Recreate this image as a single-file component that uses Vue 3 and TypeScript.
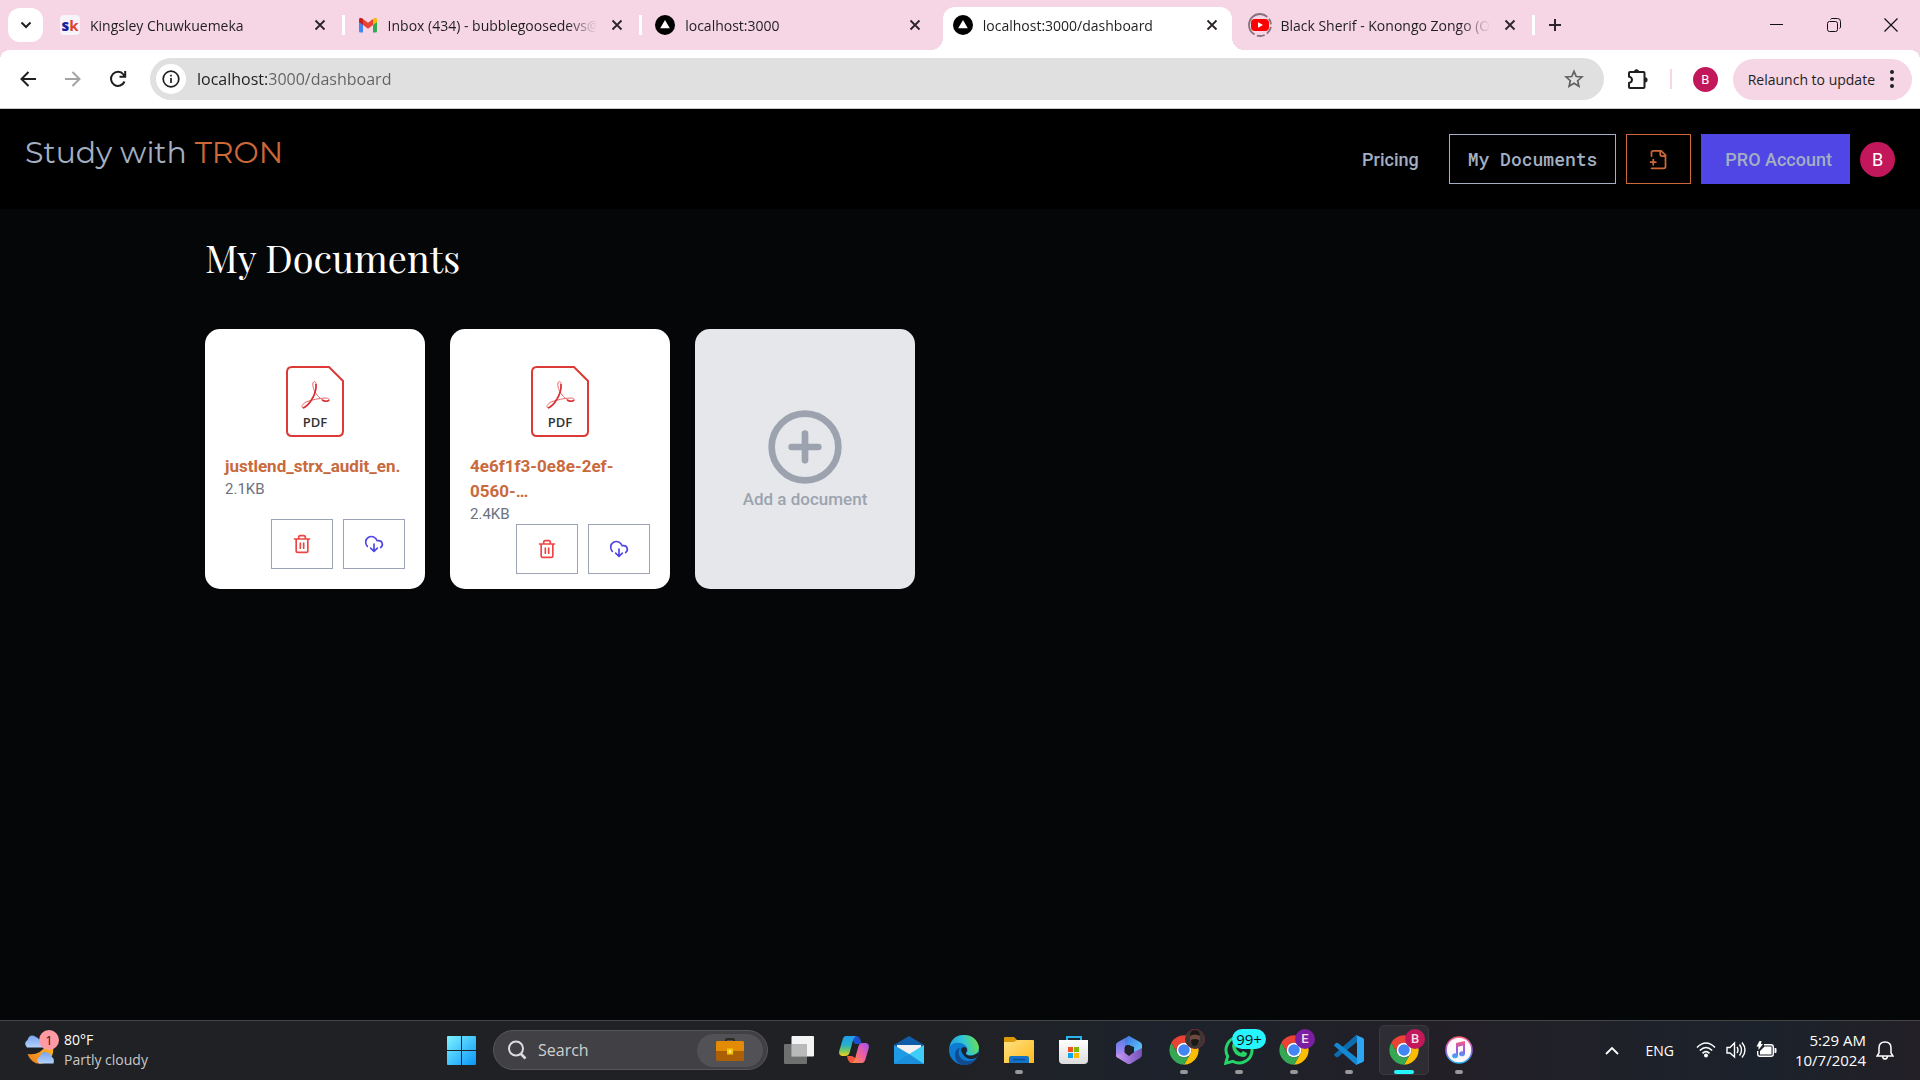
<script setup lang="ts">
import { ref } from 'vue'

interface Tab {
  title: string
  icon: 'sk' | 'gmail' | 'next' | 'youtube'
  active?: boolean
  divider?: boolean
}

interface Doc {
  name: string
  size: string
}

const tabs: Tab[] = [
  { title: 'Kingsley Chuwkuemeka', icon: 'sk', divider: true },
  { title: 'Inbox (434) - bubblegoosedevs@', icon: 'gmail', divider: true },
  { title: 'localhost:3000', icon: 'next' },
  { title: 'localhost:3000/dashboard', icon: 'next', active: true },
  { title: 'Black Sherif - Konongo Zongo (O', icon: 'youtube', divider: true },
]

const docs: Doc[] = [
  { name: 'justlend_strx_audit_en.', size: '2.1KB' },
  { name: '4e6f1f3-0e8e-2ef-0560-…', size: '2.4KB' },
]

const address = ref('localhost:3000/dashboard')
const query = ref('')
</script>

<template>
  <div class="screen">
    <svg class="defs" width="0" height="0" aria-hidden="true">
      <defs>
        <symbol id="chrome" viewBox="0 0 48 48">
          <path fill="#ea4335" d="M4.95 13A22 22 0 0 1 43.05 13H24A11 11 0 0 0 14.47 29.5Z" />
          <path fill="#fbbc04" d="M43.05 13A22 22 0 0 1 24 46L33.53 29.5A11 11 0 0 0 24 13Z" />
          <path fill="#34a853" d="M24 46A22 22 0 0 1 4.95 13L14.47 29.5A11 11 0 0 0 33.53 29.5Z" />
          <circle cx="24" cy="24" r="11" fill="#fff" />
          <circle cx="24" cy="24" r="8.6" fill="#4285f4" />
        </symbol>
        <symbol id="cross" viewBox="0 0 12 12">
          <path d="M1.5 1.5l9 9M10.5 1.5l-9 9" stroke="#2b2429" stroke-width="1.8" />
        </symbol>
        <linearGradient id="win" x1="0" y1="0" x2="1" y2="1">
          <stop offset="0" stop-color="#7df3ff" /><stop offset="1" stop-color="#0a95f8" />
        </linearGradient>
        <linearGradient id="cpA" x1="0" y1="0" x2="0" y2="1">
          <stop offset="0" stop-color="#1f9df0" /><stop offset=".45" stop-color="#27b0c8" /><stop offset=".75" stop-color="#7cc95a" /><stop offset="1" stop-color="#f5d21c" />
        </linearGradient>
        <linearGradient id="cpB" x1="1" y1="0" x2="0" y2="1">
          <stop offset="0" stop-color="#a351f0" /><stop offset=".5" stop-color="#ee5fa0" /><stop offset="1" stop-color="#fd8b3a" />
        </linearGradient>
        <linearGradient id="edgeA" x1="0" y1=".6" x2="1" y2=".4">
          <stop offset="0" stop-color="#1f9ee0" /><stop offset=".5" stop-color="#30c4d8" /><stop offset="1" stop-color="#68e04a" />
        </linearGradient>
        <linearGradient id="folder" x1="0" y1="0" x2="1" y2="1">
          <stop offset="0" stop-color="#ffe083" /><stop offset="1" stop-color="#fdbb1b" />
        </linearGradient>
        <linearGradient id="mA" x1="0" y1="0" x2="0" y2="1">
          <stop offset="0" stop-color="#4f7ce8" /><stop offset="1" stop-color="#b98af0" />
        </linearGradient>
        <linearGradient id="mB" x1="0" y1="0" x2="1" y2="1">
          <stop offset="0" stop-color="#3f6fe0" /><stop offset="1" stop-color="#62d8fa" />
        </linearGradient>
        <linearGradient id="mC" x1="0" y1="0" x2="1" y2="0">
          <stop offset="0" stop-color="#c79af5" /><stop offset="1" stop-color="#7550b8" />
        </linearGradient>
        <linearGradient id="note" x1="0" y1="0" x2="0" y2="1">
          <stop offset="0" stop-color="#fb5c74" /><stop offset=".5" stop-color="#9a5ae0" /><stop offset="1" stop-color="#2fb4f5" />
        </linearGradient>
        <linearGradient id="store" x1="0" y1="0" x2="0" y2="1">
          <stop offset="0" stop-color="#fff" /><stop offset="1" stop-color="#dcdcdc" />
        </linearGradient>
        <linearGradient id="moon" x1="1" y1="0" x2="0" y2="1">
          <stop offset="0" stop-color="#fbbf24" /><stop offset="1" stop-color="#f07a1c" />
        </linearGradient>
        <linearGradient id="cloud" x1="0" y1="0" x2="0" y2="1">
          <stop offset="0" stop-color="#79a4ee" /><stop offset="1" stop-color="#b4d2fb" />
        </linearGradient>
      </defs>
    </svg>

    <header class="strip">
      <button class="tab-search" aria-label="Search tabs">
        <svg width="12" height="8" viewBox="0 0 12 8"><path d="M1.5 1.5L6 6l4.500-4.500" fill="none" stroke="#1f1f1f" stroke-width="2" /></svg>
      </button>
      <div class="tabs" role="tablist">
        <div v-for="tab in tabs" :key="tab.title" class="tab" :class="{ active: tab.active, divider: tab.divider }" role="tab" :aria-selected="!!tab.active">
          <span v-if="tab.icon === 'sk'" class="sk"><b>s</b><i>k</i></span>
          <svg v-else-if="tab.icon === 'gmail'" class="fav" viewBox="0 0 20 20">
            <path fill="#4285f4" d="M1 5.500v10.500q0 1.500 1.500 1.500H5V8Z" />
            <path fill="#34a853" d="M19 5.500v10.500q0 1.500-1.500 1.500H15V8Z" />
            <path fill="#fbbc04" d="M15 4l1-.8q3-1.500 3 1.500v2.200L15 10Z" />
            <path fill="#c5221f" d="M5 4l-1-.8q-3-1.500-3 1.500v2.200L5 10Z" />
            <path fill="#ea4335" d="M5 4l5 3.800L15 4v6l-5 3.800L5 10Z" />
          </svg>
          <svg v-else-if="tab.icon === 'next'" class="fav" viewBox="0 0 20 20">
            <circle cx="10" cy="10" r="10" /><path fill="#fff" d="M10 5l4.800 8.200H5.200Z" />
          </svg>
          <svg v-else class="fav wide" viewBox="0 0 24 24">
            <circle cx="12" cy="12" r="11" fill="none" stroke="#85727e" stroke-width="1.800" stroke-dasharray="8 2.500 6 2.500 8 2.500 8 2.500 29 0" transform="rotate(-90 12 12)" />
            <rect x="3" y="6" width="18" height="12" rx="4" fill="#f00" /><path fill="#fff" d="M10 9.300l5 2.700-5 2.700Z" />
          </svg>
          <span class="title">{{ tab.title }}</span>
          <button class="close" :aria-label="'Close ' + tab.title"><svg width="12" height="12"><use href="#cross" /></svg></button>
        </div>
      </div>
      <button class="new-tab" aria-label="New tab">
        <svg width="14" height="14" viewBox="0 0 14 14"><path d="M7 1v12M1 7h12" stroke="#2b2429" stroke-width="2" /></svg>
      </button>
      <div class="window-controls">
        <button aria-label="Minimize"><svg width="14" height="14" viewBox="0 0 14 14"><path d="M0 6.500h13" stroke="#111" /></svg></button>
        <button aria-label="Restore"><svg width="14" height="14" viewBox="0 0 14 14" fill="none" stroke="#111"><rect x=".5" y="3.500" width="10" height="10" rx="2" /><path d="M3.500 1.500q.5-1 1.500-1h5.500q3 0 3 3V9q0 1-1 1.500" /></svg></button>
        <button aria-label="Close window"><svg width="14" height="14" viewBox="0 0 14 14"><path d="M.5.5l13 13M13.500.5l-13 13" stroke="#111" stroke-width="1.200" /></svg></button>
      </div>
    </header>

    <div class="toolbar">
      <button class="tool" aria-label="Back">
        <svg width="16" height="16" viewBox="0 0 16 16" fill="none" stroke="#1f1f1f" stroke-width="2"><path d="M16 8H2M8.500 1L1.500 8l7 7" /></svg>
      </button>
      <button class="tool" aria-label="Forward">
        <svg width="16" height="16" viewBox="0 0 16 16" fill="none" stroke="#a3a3a3" stroke-width="2"><path d="M0 8h14M7.500 1l7 7-7 7" /></svg>
      </button>
      <button class="tool reload" aria-label="Reload">
        <svg width="18" height="18" viewBox="0 0 18 18" fill="none" stroke="#1f1f1f" stroke-width="2"><path d="M15.500 11.500A7 7 0 1 1 14.500 4.500L16 6.300M16.200 1v5.800H10.500" /></svg>
      </button>
      <div class="omnibox">
        <button class="site-info" aria-label="View site information">
          <svg width="18" height="18" viewBox="0 0 18 18"><circle cx="9" cy="9" r="7.800" fill="none" stroke="#1f1f1f" stroke-width="1.700" /><path d="M9 8v5M9 4.800v1.800" stroke="#1f1f1f" stroke-width="1.700" /></svg>
        </button>
        <input v-model="address" class="url" type="text" aria-label="Address" spellcheck="false" />
        <button class="star" aria-label="Bookmark this tab">
          <svg width="20" height="20" viewBox="0 0 24 24" fill="none" stroke="#5f5f5f" stroke-width="2"><path d="M12 2.800l2.700 6.200 6.800.6-5.100 4.500 1.500 6.600L12 17.200l-5.900 3.500 1.500-6.600L2.500 9.600l6.800-.6Z" /></svg>
        </button>
      </div>
      <button class="puzzle" aria-label="Extensions">
        <svg width="22" height="22" viewBox="0 0 22 22"><path d="M3 4h13.500q1 0 1 1v14q0 1-1 1H3q-1 0-1-1v-4q3-.7 3-3.200T2 8.600V5q0-1 1-1Z" fill="none" stroke="#1f1f1f" stroke-width="2" /><path d="M7 4a2.500 2.800 0 0 1 5 0ZM18 9.200a2.600 2.600 0 0 1 0 5.200Z" fill="#1f1f1f" /></svg>
      </button>
      <span class="rule"></span>
      <button class="avatar small" aria-label="Profile">B</button>
      <button class="relaunch">Relaunch to update
        <svg width="4" height="18" viewBox="0 0 4 18" fill="#1f1f1f"><circle cx="2" cy="2" r="2" /><circle cx="2" cy="9" r="2" /><circle cx="2" cy="16" r="2" /></svg>
      </button>
    </div>

    <div class="site">
      <nav class="nav">
        <a class="brand" href="#">Study with <span>TRON</span></a>
        <div class="links">
          <a class="pricing" href="#">Pricing</a>
          <a class="btn docs" href="#">My Documents</a>
          <button class="btn new-doc" aria-label="New document">
            <svg width="21" height="21" viewBox="0 0 24 24" class="line"><path d="M4 22h14a2 2 0 0 0 2-2V7l-5-5H6a2 2 0 0 0-2 2v4M14 2v4a2 2 0 0 0 2 2h4M3 15h6M6 12v6" /></svg>
          </button>
          <button class="btn pro">PRO Account</button>
          <button class="avatar" aria-label="Account">B</button>
        </div>
      </nav>

      <main class="main">
        <h1>My Documents</h1>
        <div class="cards">
          <article v-for="doc in docs" :key="doc.name" class="card">
            <div>
              <div class="thumb">
                <svg width="58" height="71" viewBox="0 0 58 71">
                  <path d="M6 1H43L57 15V65Q57 70 52 70H6Q1 70 1 65V6Q1 1 6 1Z" fill="#fff" stroke="#dc3a36" stroke-width="2" />
                  <path d="M27.5 16C30 14 31 19 29.500 25C27.500 32 22 41 18 42C15 42 15 39 20 36C25 34 34 32 40 32C44 32 44 35 42 35.500C38 36 33 32 30 27.500C27 23 26 18 27.500 16Z" fill="none" stroke="#e8686a" stroke-width="1" />
                  <path d="M30 18Q30.500 26 26 33Q22 40 17 42M36 34Q40 36.500 43 34" fill="none" stroke="#da2f33" stroke-width="1.600" />
                  <text x="29" y="61" text-anchor="middle" class="pdf">PDF</text>
                </svg>
              </div>
              <a class="name" href="#">{{ doc.name }}</a>
              <p class="size">{{ doc.size }}</p>
            </div>
            <div class="actions">
              <button class="trash" :aria-label="'Delete ' + doc.name">
                <svg width="20" height="20" viewBox="0 0 24 24" class="line"><path d="M3 6h18M19 6v14a2 2 0 0 1-2 2H7a2 2 0 0 1-2-2V6M8 6V4a2 2 0 0 1 2-2h4a2 2 0 0 1 2 2v2M10 11v6M14 11v6" /></svg>
              </button>
              <button class="download" :aria-label="'Download ' + doc.name">
                <svg width="20" height="20" viewBox="0 0 24 24" class="line"><path d="M4 14.899A7 7 0 1 1 15.710 8h1.790a4.500 4.500 0 0 1 2.500 8.242M12 12v9M8 17l4 4 4-4" /></svg>
              </button>
            </div>
          </article>
          <button class="card add">
            <svg width="80" height="80" viewBox="0 0 24 24" class="line"><circle cx="12" cy="12" r="10" /><path d="M8 12h8M12 8v8" /></svg>
            <span>Add a document</span>
          </button>
        </div>
      </main>
    </div>

    <footer class="taskbar">
      <button class="weather">
        <span class="sky">
          <svg width="32" height="36" viewBox="0 0 32 36">
            <path d="M3.500 22Q16 24 22 13L28 10Q32 22 24 30Q9 36 3.500 22Z" fill="url(#moon)" />
            <path d="M3 15.500Q-1 11 3.500 8Q6 1 12 5Q15 5 19 15.500Z" fill="url(#cloud)" />
            <path d="M15 31.500Q11 27 16 24.500Q18 18 24 21Q27 21 27 24.500Q31 26 29.500 31.500Z" fill="url(#cloud)" />
          </svg>
          <span class="alert">1</span>
        </span>
        <span class="stack"><span class="temp">80°F</span><span class="cond">Partly cloudy</span></span>
      </button>

      <div class="dock">
        <button class="slot" aria-label="Start">
          <svg width="29" height="29" viewBox="0 0 29 29" fill="url(#win)"><path d="M0 1q0-1 1-1h13v14H0ZM15 0h13q1 0 1 1v13H15ZM0 15h14v14H1q-1 0-1-1ZM15 15h14v13q0 1-1 1H15Z" /></svg>
        </button>
        <label class="search">
          <svg width="20" height="20" viewBox="0 0 20 20" fill="none" stroke="#dcdcdd" stroke-width="2"><circle cx="9" cy="8.500" r="7" /><path d="M13.500 13.500L18.500 18.500" stroke-width="2.600" /></svg>
          <input v-model="query" type="text" placeholder="Search" aria-label="Search" />
          <span class="pill">
            <svg width="28" height="24" viewBox="0 0 28 24"><path d="M10 4V2q0-1 1-1h6q1 0 1 1v2" fill="none" stroke="#2e2a25" stroke-width="2" /><rect y="3" width="28" height="20" rx="1.500" fill="#ab5f06" /><path d="M0 13V4.500Q0 3 1.500 3h25Q28 3 28 4.500V13Z" fill="#e38a07" /><rect x="11" y="10.500" width="6" height="6" fill="#f4c90a" /><rect x="13" y="12.500" width="2" height="2" fill="#fff3a0" /></svg>
          </span>
        </label>
        <button class="slot" aria-label="Task view">
          <svg width="30" height="29" viewBox="0 0 30 29"><rect x="7.500" width="22.500" height="20.500" rx="1" fill="#f4f4f4" /><rect y="8" width="23" height="20" rx="1" fill="#7c7c7c" fill-opacity=".85" /><path d="M7.500 8H23v12.500H7.500Z" fill="#b9b9b9" /></svg>
        </button>
        <button class="slot" aria-label="Copilot">
          <svg width="30" height="28" viewBox="0 0 30 28">
            <path d="M8 0H18Q21 1 22 6Q23 9 26 8H16L13 3Z" fill="#1c4fd0" />
            <path d="M7 0H17Q14 2 13 8L10.500 17Q9.500 20 6 20H3Q-1 19 .5 14L3.500 4Q4.500 0 7 0Z" fill="url(#cpA)" />
            <path d="M22 27H12Q9 26 8 20H13L18 23Z" fill="#f0563a" />
            <path d="M23 27H13Q16 25 17 19L19.500 10Q20.500 7 24 7H27Q31 8 29.500 13L26.500 23Q25.500 27 23 27Z" fill="url(#cpB)" />
          </svg>
        </button>
        <button class="slot" aria-label="Mail">
          <svg width="30" height="28" viewBox="0 0 30 28"><path d="M0 9L15 0L30 9V14H0Z" fill="#0f5ca8" /><path d="M3 9h24v10H3Z" fill="#f1f1f1" /><path d="M0 9L15 18L30 27Q30 28 29 28H1Q0 28 0 27Z" fill="#1f9be6" /><path d="M30 9L12 20L29 28Q30 28 30 27Z" fill="#3fcdf7" /><path d="M0 28L15 18L30 28Z" fill="#1b8fdb" /></svg>
        </button>
        <button class="slot" aria-label="Edge">
          <svg width="30" height="30" viewBox="0 0 30 30">
            <circle cx="15" cy="15" r="15" fill="#0c7bd2" />
            <path d="M.5 12Q3 0 15 0Q27 0 30 12Q30 20 22 20Q17 20 17 18Q19 17 18.500 14Q17 9 11 8Q4 7 .5 12Z" fill="url(#edgeA)" />
            <path d="M11 13Q8 17 11 22Q16 29 27 24Q22 31 14 30Q6 28 6 20Q6 14 11 13Z" fill="#114a8f" />
            <path d="M12 14Q14 11 17 12.500Q19 15 16.800 18Q17 21 23 20.800Q27 20 30 17Q29 22 27 23Q19 26 14.500 20Q12 17 12 14Z" fill="#202226" />
          </svg>
        </button>
        <button class="slot" aria-label="File Explorer">
          <svg width="30" height="28" viewBox="0 0 30 28"><path d="M0 2Q0 1 1 1H10L13 4V10H0Z" fill="#dc9a09" /><path d="M0 6H10L13 4H29Q30 4 30 5V27H0Z" fill="url(#folder)" /><path d="M5 27V22Q5 20 7 20H23Q25 20 25 22V27Z" fill="#1173c6" /><path d="M9 23.500H21" stroke="#0a4d94" stroke-width="1.500" /></svg>
          <i class="mark"></i>
        </button>
        <button class="slot" aria-label="Microsoft Store">
          <svg width="30" height="30" viewBox="0 0 30 30"><path d="M8 6V2H22V6" fill="none" stroke="#29b5ea" stroke-width="2" /><path d="M0 5H29V25Q29 29 25 29H4Q0 29 0 25Z" fill="url(#store)" /><path fill="#f25022" d="M9 12h5v5H9Z" /><path fill="#7fba00" d="M15 12h5v5H15Z" /><path fill="#00a4ef" d="M9 18h5v5H9Z" /><path fill="#ffb900" d="M15 18h5v5H15Z" /></svg>
        </button>
        <button class="slot" aria-label="Microsoft 365">
          <svg width="26" height="28" viewBox="0 0 26 28"><path d="M13 0L2 6Q0 7 0 9V19Q0 21 2 22L9 18V10L16 6V2Z" fill="url(#mA)" /><path d="M13 0L24 6Q26 7 26 9V19L18 17V11L9 8V3Z" fill="url(#mB)" /><path d="M26 19Q26 21 24 22L15 27.500Q13 28.500 11 27.500L2 22Q0 21 0 19L9 17L13 20L18 16L26 12Z" fill="url(#mC)" /><path d="M13 9L17.500 11.500V16.500L13 19L8.500 16.500V11.500Z" fill="#1f2228" /></svg>
        </button>
        <button class="slot" aria-label="Chrome">
          <svg width="32" height="32"><use href="#chrome" /></svg>
          <svg class="badge" width="20" height="20" viewBox="0 0 20 20"><circle cx="10" cy="10" r="10" fill="#3e3632" /><path d="M5 8Q5 2 10 2T15 8Q15 16 10 17T5 8Z" fill="#6c4a40" /><path d="M5 7Q5 1 10 1T15 7Q10 4 5 7ZM6 11Q10 9 14 11Q14 16 10 17T6 11Z" fill="#1c1717" /></svg>
          <i class="mark"></i>
        </button>
        <button class="slot" aria-label="WhatsApp">
          <svg width="30" height="30" viewBox="0 0 30 30"><path d="M1.800 28.200L3.700 21.300A13 13 0 1 1 8.700 26.300Z" fill="none" stroke="#25d366" stroke-width="3" /><path d="M9 8Q11 6 12 9L13 11L12 13.500Q14 17 17 18L19 16L23 18Q23 22 19 22Q9 21 8 11Z" fill="#25d366" /></svg>
          <span class="badge count">99+</span>
          <i class="mark"></i>
        </button>
        <button class="slot" aria-label="Chrome, profile E">
          <svg width="32" height="32"><use href="#chrome" /></svg>
          <span class="badge purple">E</span>
          <i class="mark"></i>
        </button>
        <button class="slot" aria-label="Visual Studio Code">
          <svg width="30" height="30" viewBox="0 0 30 30"><path d="M0 20L2 22Q3 22.500 4 22L23 7V0Q22 0 21 1L.5 19Q0 19.500 0 20Z" fill="#0b6cb0" /><path d="M0 10L2 8Q3 7.500 4 8L23 23V30Q22 30 21 29L.5 11Q0 10.500 0 10Z" fill="#1488d2" /><path d="M22 0L29 3Q30 3.500 30 5V25Q30 26.500 29 27L22 30Q23 29 23 28V2Q23 1 22 0Z" fill="#2aa6f5" /></svg>
          <i class="mark"></i>
        </button>
        <button class="slot current" aria-label="Chrome, profile B">
          <svg width="32" height="32"><use href="#chrome" /></svg>
          <span class="badge">B</span>
          <i class="mark"></i>
        </button>
        <button class="slot" aria-label="iTunes">
          <svg width="28" height="28" viewBox="0 0 28 28"><circle cx="14" cy="14" r="13" fill="#fdf8fc" stroke="url(#note)" stroke-width="1.600" /><path d="M11 7L20 5V17.500A3 2.500 0 1 1 18 15.500V9.500L13 10.700V19.500A3 2.500 0 1 1 11 17.500Z" fill="url(#note)" /></svg>
          <i class="mark"></i>
        </button>
      </div>

      <div class="tray">
        <button class="chev" aria-label="Show hidden icons"><svg width="14" height="9" viewBox="0 0 14 9" fill="none" stroke="#fff" stroke-width="1.800"><path d="M1 8l6-6 6 6" /></svg></button>
        <button class="lang">ENG</button>
        <button class="status" aria-label="Network, volume and battery">
          <svg width="20" height="18" viewBox="0 0 20 18" fill="none" stroke="#fff" stroke-width="1.600"><path d="M1 6.500Q10-2.500 19 6.500M3.800 9.500Q10 3.500 16.200 9.500M6.500 12.300Q10 9 13.500 12.300" /><circle cx="10" cy="14.500" r="1.200" fill="#fff" /></svg>
          <svg width="20" height="18" viewBox="0 0 20 18" fill="none" stroke="#fff" stroke-width="1.400"><path d="M1 6.500h3L8.500 2v14L4 12H1ZM11 6q2 3 0 6M13.500 3.500q4 5.500 0 11M16 1.500q6 7.500 0 15" /></svg>
          <svg width="21" height="18" viewBox="0 0 21 18"><path d="M8 3.700H15Q17.300 3.700 17.300 6V13Q17.300 15.300 15 15.300H4Q1.700 15.300 1.700 13V10" fill="none" stroke="#fff" stroke-width="1.400" /><path d="M4 13.500V10L8.500 5.500H15.500V13.500ZM18.500 7h1q1 0 1 1v3q0 1-1 1h-1ZM3.500 0H5.500L5 3H7L2.500 9V5.500H.5Z" fill="#fff" /></svg>
        </button>
        <button class="clock"><span>5:29 AM</span><span>10/7/2024</span></button>
        <button class="bell" aria-label="Notifications"><svg width="18" height="20" viewBox="0 0 18 20" fill="none" stroke="#fff" stroke-width="1.500"><path d="M3 13V8Q3 2 9 2T15 8V13L17 16H1ZM6.500 16.500Q7 19 9 19T11.500 16.500" /></svg></button>
      </div>
    </footer>
  </div>
</template>

<style>
body {
  margin: 0;
  background: #050608;
}
</style>

<style scoped>
* {
  box-sizing: border-box;
}
.screen {
  display: flex;
  flex-direction: column;
  min-height: 100vh;
  font-family: "Segoe UI", "Open Sans", sans-serif;
  color: #1f1f1f;
}
.defs {
  position: absolute;
}
button {
  display: flex;
  align-items: center;
  justify-content: center;
  margin: 0;
  padding: 0;
  border: 0;
  background: none;
  color: inherit;
  font: inherit;
}
input {
  min-width: 0;
  padding: 0;
  border: 0;
  outline: 0;
  background: none;
  font: inherit;
}
a {
  text-decoration: none;
}

/* Tab strip */
.strip {
  display: flex;
  align-items: center;
  height: 50px;
  padding-left: 8px;
  background: #f6d5e4;
}
.tab-search {
  width: 35px;
  height: 34px;
  margin-right: 3px;
  border-radius: 12px;
  background: #fff;
}
.tabs {
  display: flex;
  flex: 0 1 1488px;
  align-self: stretch;
  min-width: 0;
}
.tab {
  position: relative;
  display: flex;
  flex: 1;
  align-items: center;
  gap: 10px;
  min-width: 0;
  padding: 0 18px 0 14px;
  font-size: 14px;
}
.tab > * {
  z-index: 1;
}
.tab.divider::after {
  content: "";
  position: absolute;
  right: -1px;
  top: 15px;
  width: 3px;
  height: 20px;
  background: #fff;
}
.tab.active::before {
  content: "";
  position: absolute;
  z-index: 0;
  inset: 7px 4px 0;
  border-radius: 12px 12px 0 0;
  background: #fff;
}
.tab.active::after {
  content: "";
  position: absolute;
  left: -8px;
  right: -8px;
  bottom: 0;
  height: 12px;
  background:
    radial-gradient(circle at 0 0, transparent 12px, #fff 12px) left / 12px 12px no-repeat,
    radial-gradient(circle at 100% 0, transparent 12px, #fff 12px) right / 12px 12px no-repeat;
}
.fav {
  flex: none;
  width: 20px;
  height: 20px;
}
.fav.wide {
  width: 24px;
  height: 24px;
  margin: 0 -2px;
}
.sk {
  display: flex;
  flex: none;
  align-items: center;
  justify-content: center;
  width: 20px;
  height: 20px;
  border-radius: 4px;
  background: #f6f4f8;
  font-size: 15px;
  font-weight: 700;
  line-height: 16px;
}
.sk b {
  color: #1d1f9c;
}
.sk i {
  color: #e0402f;
  font-style: normal;
}
.title {
  flex: 1;
  overflow: hidden;
  white-space: nowrap;
  mask-image: linear-gradient(90deg, #000 calc(100% - 34px), transparent calc(100% - 4px));
}
.new-tab {
  width: 42px;
  height: 40px;
}
.window-controls {
  display: flex;
  margin-left: auto;
  padding-right: 1px;
}
.window-controls button {
  width: 57px;
  height: 48px;
}

/* Toolbar */
.toolbar {
  display: flex;
  align-items: center;
  height: 59px;
  padding: 0 8px 0 5px;
  border-bottom: 1px solid #c9cccc;
  background:
    radial-gradient(circle at 10px 10px, #fff 10px, #f6d5e4 10px) left top / 10px 10px no-repeat,
    radial-gradient(circle at 0 10px, #fff 10px, #f6d5e4 10px) right top / 10px 10px no-repeat,
    #fff;
}
.tool {
  width: 45px;
  height: 40px;
}
.tool.reload {
  margin-right: 10px;
}
.omnibox {
  display: flex;
  flex: 1;
  align-items: center;
  height: 42px;
  padding: 0 20px 0 6px;
  border-radius: 21px;
  background: #e0e0e0;
}
.site-info {
  width: 30px;
  height: 30px;
  margin-right: 11px;
  border-radius: 50%;
  background: #fff;
}
.url {
  flex: 1;
  height: 28px;
  color: #1f1f1f;
  font-size: 16px;
  background: linear-gradient(90deg, #1f1f1f 70px, #616161 70px);
  background-clip: text;
  -webkit-background-clip: text;
  -webkit-text-fill-color: transparent;
}
.puzzle {
  width: 24px;
  margin-left: 22px;
}
.rule {
  width: 2px;
  height: 20px;
  margin: 0 21px 0 20px;
  background: #f6d5e4;
}
.avatar {
  width: 35px;
  height: 35px;
  border-radius: 50%;
  background: #c2185b;
  color: #fff;
  font: 400 18px Roboto, sans-serif;
}
.avatar.small {
  width: 25px;
  height: 25px;
  font-size: 13px;
}
.relaunch {
  gap: 15px;
  height: 41px;
  margin-left: 15px;
  padding: 0 18px 0 15px;
  border-radius: 21px;
  background: #f6d5e4;
  font-size: 14px;
}

/* Site */
.site {
  flex: 1;
  background: #050608;
  font-family: Roboto, sans-serif;
}
.nav {
  display: flex;
  justify-content: space-between;
  padding: 25px;
  background: #000;
}
.brand {
  color: #a3afc2;
  font: 400 30px/38px Montserrat, Inter, sans-serif;
}
.brand span {
  color: #cd6839;
}
.links {
  display: flex;
  align-items: center;
  gap: 10px;
}
.pricing {
  margin-right: 20px;
  color: #a3afc2;
  font-size: 18px;
  font-weight: 500;
}
.btn {
  display: flex;
  align-items: center;
  height: 50px;
  border: 1px solid #a3afc2;
  color: #a3afc2;
  font-size: 18px;
  font-weight: 500;
}
.docs {
  padding: 0 18px;
  font-family: "Roboto Mono", "Liberation Mono", monospace;
}
.new-doc {
  width: 65px;
  border-color: #cd6839;
  color: #cd6839;
}
.pro {
  padding: 0 17px 0 23px;
  border-color: #4f46e5;
  background: #4f46e5;
}
.line {
  fill: none;
  stroke: currentColor;
  stroke-width: 2;
  stroke-linecap: round;
  stroke-linejoin: round;
}
.main {
  padding: 25px 205px;
}
h1 {
  margin: 0 0 47px;
  color: #fff;
  font: 400 38px/48px "Playfair Display", "Liberation Serif", serif;
}
.cards {
  display: flex;
  flex-wrap: wrap;
  gap: 25px;
}
.card {
  display: flex;
  flex-direction: column;
  justify-content: space-between;
  width: 220px;
  height: 260px;
  padding: 20px;
  border-radius: 15px;
  background: #fff;
}
.thumb {
  display: flex;
  align-items: center;
  justify-content: center;
  height: 105px;
}
.pdf {
  fill: #333;
  font: 600 13px "Open Sans", sans-serif;
}
.name {
  display: block;
  color: #c96a3c;
  font-size: 17px;
  font-weight: 700;
  line-height: 25px;
}
.size {
  margin: 0;
  color: #6b7280;
  font-size: 15px;
  line-height: 20px;
}
.actions {
  display: flex;
  justify-content: flex-end;
  gap: 10px;
}
.actions button {
  width: 62px;
  height: 50px;
  border: 1px solid #9ca3b4;
}
.trash {
  color: #ef4444;
}
.download {
  color: #4f46e5;
}
.add {
  justify-content: center;
  background: #e5e7eb;
  color: #9ca3af;
  font-size: 17px;
  font-weight: 500;
  line-height: 25px;
}

/* Taskbar */
.taskbar {
  display: grid;
  grid-template-columns: 1fr auto 1fr;
  align-items: center;
  height: 60px;
  padding-bottom: 1px;
  border-top: 1px solid #434446;
  background: linear-gradient(90deg, #202125 50%, #1c222b 60%, #231f27 75%, #1b222b 92%, #231f26);
  color: #fff;
  font-size: 15px;
}
.weather {
  justify-self: start;
  gap: 8px;
  padding-left: 24px;
  line-height: 20px;
}
.sky {
  position: relative;
  display: flex;
}
.alert {
  position: absolute;
  top: -2px;
  right: -3px;
  width: 20px;
  height: 20px;
  border-radius: 50%;
  background: #ff99a4;
  color: #222;
  font-size: 13px;
}
.stack {
  display: flex;
  flex-direction: column;
  align-items: flex-start;
  font-size: 14px;
}
.cond {
  color: #c8c8c9;
}
.dock {
  display: flex;
  align-items: center;
}
.slot {
  position: relative;
  width: 55px;
  height: 50px;
}
.search {
  display: flex;
  align-items: center;
  width: 275px;
  height: 40px;
  margin: 0 3px 0 4px;
  padding: 0 4px 0 13px;
  border: 1px solid #56565a;
  border-radius: 20px;
  background: #414145;
}
.search input {
  flex: 1;
  margin-left: 11px;
  color: #fff;
  font-size: 16px;
}
.search input::placeholder {
  color: #cfcfd0;
  opacity: 1;
}
.pill {
  display: flex;
  align-items: center;
  justify-content: center;
  width: 66px;
  height: 33px;
  border-radius: 17px;
  background: #525256;
}
.mark {
  position: absolute;
  bottom: 1px;
  left: 50%;
  width: 8px;
  height: 4px;
  border-radius: 2px;
  background: #97989a;
  transform: translateX(-50%);
}
.current::before {
  content: "";
  position: absolute;
  z-index: 0;
  inset: 0 2px 0 3px;
  border: 1px solid #3b3940;
  border-radius: 5px;
  background: #2f2d34;
}
.current > svg {
  z-index: 1;
}
.current .mark {
  width: 20px;
  background: #26f4ff;
}
.badge {
  position: absolute;
  z-index: 2;
  top: 4px;
  left: 29px;
  width: 20px;
  height: 20px;
  border-radius: 10px;
  background: #c2185b;
  color: #f4dfe8;
  font: 500 13px/20px Roboto, sans-serif;
}
.purple {
  background: #7b1fa2;
}
.count {
  left: 21px;
  width: 34px;
  background: #26f4ff;
  color: #111;
  font: 400 15px/20px "Open Sans", sans-serif;
}
.tray {
  display: flex;
  align-items: center;
  justify-self: end;
  padding-right: 26px;
}
.chev {
  margin-right: 27px;
}
.lang {
  margin-right: 22px;
  font-size: 14px;
}
.status {
  gap: 10px;
}
.clock {
  flex-direction: column;
  align-items: flex-end;
  width: 89px;
  font-size: 15px;
  line-height: 20px;
}
.bell {
  margin-left: 10px;
}
</style>
